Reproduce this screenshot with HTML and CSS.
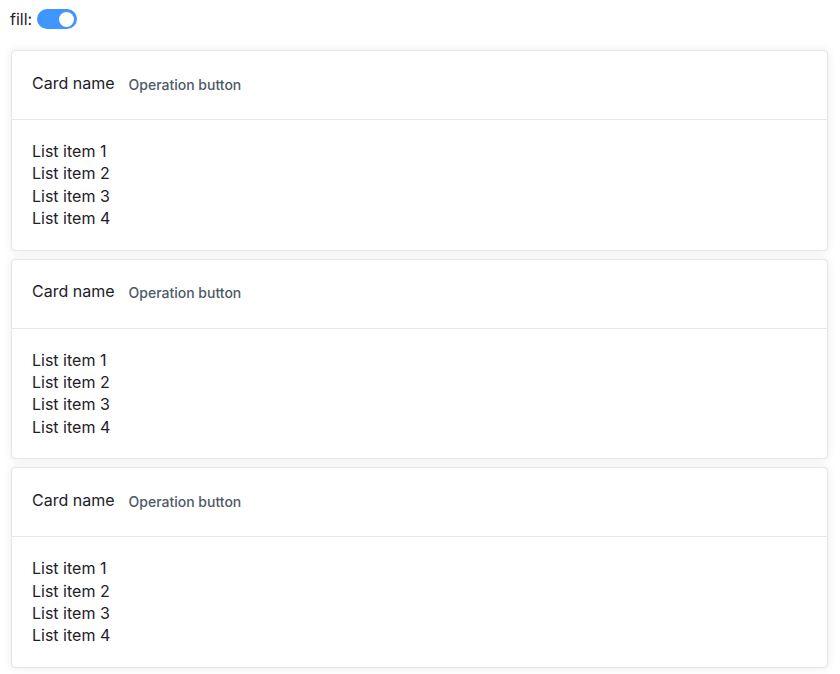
FILE: index.html
```html
<!DOCTYPE html>
<html>
<head>
<meta charset="utf-8">
<link rel="stylesheet" href="styles.css">
</head>
<body>
<div class="toolbar">
  <span class="label">fill:</span>
  <span class="switch"><span class="knob"></span></span>
</div>
<div class="cards">
  <div class="card">
    <div class="card-header"><span class="title">Card name</span><span class="op">Operation button</span></div>
    <div class="card-body">
      <div>List item 1</div><div>List item 2</div><div>List item 3</div><div>List item 4</div>
    </div>
  </div>
  <div class="card">
    <div class="card-header"><span class="title">Card name</span><span class="op">Operation button</span></div>
    <div class="card-body">
      <div>List item 1</div><div>List item 2</div><div>List item 3</div><div>List item 4</div>
    </div>
  </div>
  <div class="card">
    <div class="card-header"><span class="title">Card name</span><span class="op">Operation button</span></div>
    <div class="card-body">
      <div>List item 1</div><div>List item 2</div><div>List item 3</div><div>List item 4</div>
    </div>
  </div>
</div>
</body>
</html>
```
FILE: styles.css
```css
html, body {
  margin: 0;
  padding: 0;
  background: #fff;
  font-family: Inter, "Noto Sans", sans-serif;
  color: #1d2129;
}
.toolbar {
  display: flex;
  align-items: center;
  gap: 5px;
  padding: 9px 10px 0 10px;
  height: 20px;
  font-size: 16px;
}
.label {
  color: #1d2129;
}
.switch {
  width: 40px;
  height: 20px;
  border-radius: 10px;
  background: #4096ff;
  display: flex;
  align-items: center;
  justify-content: flex-end;
  padding: 0 3px;
  box-sizing: border-box;
}
.knob {
  width: 15px;
  height: 15px;
  border-radius: 50%;
  background: #fff;
}
.cards {
  display: flex;
  flex-direction: column;
  gap: 8px;
  padding: 21px 12px 8px 11px;
}
.card {
  border: 1px solid #e5e6eb;
  border-radius: 4px;
  background: #fff;
  box-shadow: 0 0 10px rgba(0, 0, 0, 0.08);
}
.card-header {
  height: 68px;
  display: flex;
  align-items: center;
  gap: 14px;
  padding: 0 20px;
  border-bottom: 1px solid #e5e6eb;
}
.title {
  font-size: 16px;
  color: #1d2129;
  margin-top: -5px;
}
.op {
  font-size: 14px;
  font-weight: 500;
  color: #4e5969;
  margin-top: -2px;
}
.card-body {
  padding: 20px;
  font-size: 16px;
  line-height: 22.4px;
  color: #1d2129;
}
```
